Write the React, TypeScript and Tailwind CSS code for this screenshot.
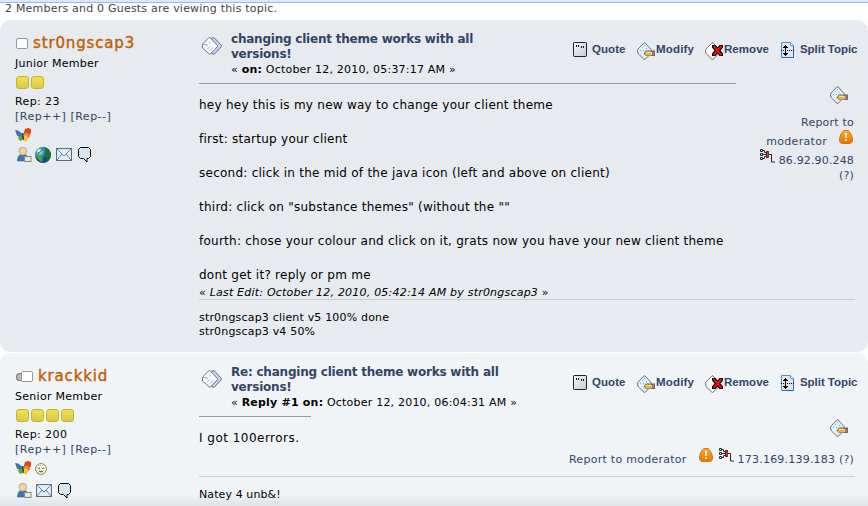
import type { ReactNode } from 'react';

function TopicIcon() {
  return (
    <svg className="block shrink-0" width="21" height="19" viewBox="0 0 21 19" fill="none">
      <path d="M9 1.500 L12 .5 L19.500 8.500 V9.500 L12 17.500 L9 16Z" fill="#c9d2f7" stroke="#5a6070" strokeWidth=".9" />
      <path d="M7 .5 L8 .5 L15.500 8.500 V9.500 L8 17.500 L.5 11 V7.500 L2 5.500Z" fill="#f6fbfd" stroke="#63686e" strokeWidth=".9" />
      <path d="M1 7.500h4v2M5 12.500l3-3M8 13.500l3-3M7 6.500l2-2" stroke="#8d9daa" strokeWidth=".8" />
    </svg>
  );
}

function ModifyIcon() {
  return (
    <svg className="block shrink-0" width="18" height="19" viewBox="0 0 18 19" fill="none">
      <path d="M7 .8 H8 L14.500 8 L13 12.500 L8 17.300 H7 L1.500 12 L.6 10 V7.500Z" fill="#dceff6" stroke="#60656b" strokeWidth=".9" />
      <path d="M5 5.500h1M7 3.500h1M9 6.500h1M3 8.500h1M6 8.500h1" stroke="#8db3c4" />
      <path d="M2 10.500h4" stroke="#fff" />
      <path d="M6.500 11.500L9 8.500H18v5.500H9Z" fill="#7d6a58" />
      <path d="M8 11l1-1.500h5v4H9l-1-1.500Z" fill="#ebb13f" /><path d="M9 10h5v1H9Z" fill="#ffe184" />
      <path d="M14 10h1v3h-1Z" fill="#c6ced3" /><path d="M15 10h2v3h-2Z" fill="#a97378" />
    </svg>
  );
}

function RemoveIcon() {
  return (
    <svg className="block shrink-0" width="18" height="19" viewBox="0 0 18 19" fill="none">
      <path d="M7 .8 H8 L14 8 L13 12.500 L8 17.300 H7 L1.500 12 L.6 10 V7.500Z" fill="#fbfdfd" stroke="#60656b" strokeWidth=".9" />
      <path d="M7 3h3.500l2 2.500L14.500 3H18v2.500l-2.500 3L18 11.500V14h-3.500l-2-2.500-2 2.500H7v-2.500l2.500-3L7 5.500Z" fill="#000" />
      <path d="M8.500 4l8 9M16.500 4l-8 9" stroke="#f01212" strokeWidth="1.900" />
    </svg>
  );
}

function QuoteIcon() {
  return (
    <svg className="block shrink-0" width="14" height="15" viewBox="0 0 14 15">
      <defs><linearGradient id="quoteFill" x2="1" y2="1"><stop stopColor="#f6f7fa" /><stop offset="1" stopColor="#c4c9d5" /></linearGradient></defs>
      <rect x=".5" y=".5" width="13" height="14" rx=".7" fill="url(#quoteFill)" stroke="#20232a" />
      <path d="M3 3h1v2H3zM5 3h1v2H5zM8 4h1v2H8zM10 4h1v2h-1z" fill="#10131a" />
    </svg>
  );
}

function SplitIcon() {
  return (
    <svg className="block shrink-0" width="13" height="16" viewBox="0 0 13 16">
      <path d="M.5.5h9l3 3v12H.5Z" fill="#dfe5eb" stroke="#5b8fc0" /><path d="M12.500 4v11.500H1" fill="none" stroke="#286cac" />
      <path d="M9.500.5v3h3" fill="#fff" stroke="#68a0d0" />
      <path d="M0 8.500h13" stroke="#000" strokeDasharray="1 1" />
      <path d="M4 3h1v1h1v1h1v1H5v2H4V6H2V5h1V4h1zM4 9h1v2h2v1H6v1H5v1H4v-1H3v-1H2v-1h2z" fill="#000" />
    </svg>
  );
}

function AlertIcon() {
  return (
    <svg className="block shrink-0" width="14" height="14" viewBox="0 0 14 14">
      <defs><linearGradient id="alertFill" x2="0" y2="1"><stop stopColor="#ffad32" /><stop offset="1" stopColor="#e87300" /></linearGradient></defs>
      <path d="M5 .5h4c2.500 1.500 4.500 6 4.500 9.500 0 2-1 3.500-3 3.500h-7c-2 0-3-1.500-3-3.500C.5 6.500 2.500 2 5 .5Z" fill="url(#alertFill)" stroke="#d77410" />
      <path d="M6 3h2l-.4 5H6.400ZM6.200 9h1.600v2H6.200Z" fill="#fff" />
    </svg>
  );
}

function NetworkIcon() {
  return (
    <svg className="block shrink-0" width="15" height="14" viewBox="0 0 15 14" fill="none">
      <path d="M.5.5h2v2h-2zM.5 4.500h2v2h-2zM.5 8.500h2v2h-2zM3 1.500h1.500v2H7M3 5.500h4M3 9.500h1.500v-2H7M9 5.500h2.500v7.500H15" stroke="#25272b" />
      <path d="M6.500 2.500h2v6h-2z" fill="#ee321b" stroke="#38211e" /><path d="M7 3h1.500v5H7z" fill="#ee321b" />
    </svg>
  );
}

function Butterfly() {
  return (
    <svg className="block" width="17" height="14" viewBox="0 0 17 14">
      <path d="M0 2l3 .5 4 3 1 3-3 1-3-2Z" fill="#416fb4" /><path d="M3 9l3-1.500 2 1v3l-2 1.500-2-1Z" fill="#5dab25" />
      <path d="M8.500 6L10 1l3-1 3 1v3l-1 3-3-2Z" fill="#dc4717" /><path d="M8 6.500l3-1.500 4 1.500v2l-2.500 2Z" fill="#f27b20" /><path d="M8 8l4-1 1 3-1 3-2 .500-2-2Z" fill="#f7c233" /><path d="M7 5h1.500l.5 4v3H8L7 9Z" fill="#3b4b62" />
    </svg>
  );
}

function Person() {
  return (
    <svg className="block" width="15" height="15" viewBox="0 0 15 15">
      <path d="M.5 14c0-4 1.500-7 5.500-7s5 3 5 7Z" fill="#3d75ad" stroke="#315e90" strokeWidth=".6" />
      <circle cx="5.800" cy="4.200" r="3.900" fill="#ecd5a4" stroke="#b6935c" strokeWidth=".7" />
      <rect x="7.500" y="9.500" width="6.500" height="5" fill="#dedede" stroke="#8b8b8b" /><path d="M9 11h1v2H9zM12 11h1v2h-1z" fill="#fff" />
    </svg>
  );
}

function Globe() {
  return (
    <svg className="block" width="16" height="16" viewBox="0 0 16 16">
      <defs><radialGradient id="sea" cx=".3" cy=".3"><stop stopColor="#e6f7fc" /><stop offset=".45" stopColor="#3d9fd0" /><stop offset="1" stopColor="#104878" /></radialGradient></defs>
      <circle cx="8" cy="8" r="8" fill="url(#sea)" />
      <path d="M1 8l2 0 4 2 1 3-1 2c-3-1-5-4-6-7ZM5 1l3 0 0 2-2 2-2 2-2-1 2-2Z" fill="#4ba43c" /><path d="M11 2l2 .500 2.500 3 .5 3-1.500 3-2 1.500-1-3-2-2 1-3Z" fill="#19742b" /><path d="M3 3l3-1.500-1 3-3 1Z" fill="#e6f5ef" />
    </svg>
  );
}

function Mail() {
  return (
    <svg className="block" width="16" height="13" viewBox="0 0 16 13" fill="none">
      <rect x=".5" y=".5" width="15" height="12" fill="#e3eef6" stroke="#536f88" />
      <path d="M1 1l7 7 7-7M1 12l5-6M15 12l-5-6" stroke="#607f99" />
    </svg>
  );
}

function Balloon() {
  return <svg className="block" width="14" height="16" viewBox="0 0 14 16"><path d="M2.500.5h8l2 2v7l-2 2h-1.500v3.500l-3.500-3.500h-3l-2-2v-7Z" fill="#d8e6f0" stroke="#090b0d" /></svg>;
}

function Crosshair() {
  return (
    <svg className="block" width="12" height="12" viewBox="0 0 12 12" fill="none">
      <circle cx="6" cy="6" r="5.400" fill="#fffff8" stroke="#87852b" /><path d="M3 2.500h6M2 4.500h8M2 7.500h8M3 9.500h6" stroke="#bbb" strokeDasharray="1 1" />
      <path d="M3 5.500h2M7 5.500h2M4 8.500h4" stroke="#77763e" />
    </svg>
  );
}

function Stars({ count }: { count: number }) {
  return (
    <div className="mt-[5px] flex h-[13px] gap-[2px] pl-px">
      {Array.from({ length: count }, (_, i) => (
        <span key={i} className="size-[13px] rounded-[3px] border border-[#c6b42f] bg-linear-to-b from-[#f3e14f] to-[#d8c94b]" />
      ))}
    </div>
  );
}

function Action({ icon, label, className }: { icon: ReactNode; label: string; className: string }) {
  return <a className={`flex shrink-0 items-start ${className}`}>{icon}<span className="leading-[15px] whitespace-nowrap">{label}</span></a>;
}

function Actions() {
  return (
    <div className="flex h-[19px] w-[285px] font-['Liberation_Sans',Arial,sans-serif] text-[11.5px] font-bold tracking-[0.18px] text-[#334466]">
      <Action icon={<QuoteIcon />} label="Quote" className="w-[64px] gap-[5px] tracking-[0.05px]" />
      <Action icon={<ModifyIcon />} label="Modify" className="w-[68px] gap-px" />
      <Action icon={<RemoveIcon />} label="Remove" className="w-[76px] gap-px tracking-[0.05px]" />
      <Action icon={<SplitIcon />} label="Split Topic" className="gap-[6px] tracking-[-0.05px]" />
    </div>
  );
}

function Author({ name, rank, stars, rep, away, contacts }: { name: string; rank: string; stars: number; rep: number; away?: boolean; contacts: ReactNode }) {
  return (
    <aside className="w-[184px] shrink-0 pt-[12px]">
      <div className="flex h-[22px] items-center">
        {away && <span className="mt-px ml-px h-[8px] w-[5px] rounded-l-full border border-r-0 border-[#777] bg-[#bbb]" />}
        <span className={`h-[11px] w-[12px] rounded-[2px] border border-[#999] bg-white ${away ? '' : 'ml-px'}`} />
        <a className="ml-[5px] text-[15px] leading-[22px] tracking-[0.85px] text-[#c06002] [-webkit-text-stroke:0.4px_#c06002]">{name}</a>
      </div>
      <div className="mt-[2px] leading-[15px] tracking-[0.28px]">{rank}</div>
      <Stars count={stars} />
      <div className="mt-[5px] leading-[15px] tracking-[0.4px]">Rep: {rep}</div>
      <div className="leading-[15px] tracking-[0.5px] text-[#334466]"><a>[Rep++]</a> <a>[Rep--]</a></div>
      {contacts}
    </aside>
  );
}

function Heading({ title, prefix, date }: { title: string; prefix: string; date: string }) {
  return (
    <header className="flex h-[51px]">
      <div className="w-[32px] shrink-0 pt-[6px] pl-[3px]"><TopicIcon /></div>
      <div className="w-[342px] shrink-0 pt-px">
        <h2 className="w-[290px] text-[12px] leading-[15px] font-bold tracking-[-0.22px] whitespace-pre-line text-[#334466]">{title}</h2>
        <div className="leading-[15px] whitespace-nowrap">« <b>{prefix}</b> {date} »</div>
      </div>
      <div className="shrink-0 pt-[11px]"><Actions /></div>
    </header>
  );
}

const lines = [
  'hey hey this is my new way to change your client theme',
  'first: startup your client',
  'second: click in the mid of the java icon (left and above on client)',
  'third: click on "substance themes" (without the ""',
  'fourth: chose your colour and click on it, grats now you have your new client theme',
  'dont get it? reply or pm me',
];

export default function App() {
  return (
    <main className="h-[506px] w-[868px] overflow-hidden bg-white font-['DejaVu_Sans',sans-serif] text-[11px] tracking-[0.21px] text-black">
      <div className="h-[20px] border-t-2 border-[#dce8fa]">
        <div className="h-px bg-[#9db7e5]" />
        <p className="-mt-[2px] pl-[5px] leading-[15px] text-[#444]">2 Members and 0 Guests are viewing this topic.</p>
      </div>
      <article className="flex h-[332px] rounded-[11px] bg-[#e7eaef] pl-[15px]">
        <Author name="str0ngscap3" rank="Junior Member" stars={2} rep={23} contacts={
          <>
            <div className="mt-[4px]"><Butterfly /></div>
            <div className="mt-[4px] flex h-[17px] items-center pl-[2px]"><Person /><div className="ml-[3px]"><Globe /></div><div className="ml-[5px]"><Mail /></div><div className="ml-[6px]"><Balloon /></div></div>
          </>
        } />
        <section className="w-[656px] pt-[11px]">
          <Heading title={'changing client theme works with all\nversions!'} prefix="on:" date="October 12, 2010, 05:37:17 AM" />
          <div className="flex h-[217px]">
            <div className="w-[537px] shrink-0">
              <hr className="mt-px border-[#9999aa]" />
              <div className="mt-[13px] flex flex-col gap-[17px] text-[12px] leading-[17px] tracking-[0.25px] whitespace-nowrap">{lines.map(line => <p key={line}>{line}</p>)}</div>
              <div className="mt-px leading-[15px] whitespace-nowrap">« <i>Last Edit: October 12, 2010, 05:42:14 AM by str0ngscap3</i> »</div>
            </div>
            <div className="flex w-[119px] flex-col items-end pt-[4px] pr-px text-[#334466]">
              <div className="pr-[6px]"><ModifyIcon /></div>
              <div className="mt-[10px] leading-[15px]">Report to</div>
              <div className="flex h-[19px] items-start"><span className="pt-[4px] leading-[15px] tracking-[0.3px]">moderator</span><div className="mr-px ml-[12px]"><AlertIcon /></div></div>
              <div className="flex h-[19px] items-start"><NetworkIcon /><span className="pt-[4px] pl-[4px] leading-[15px] tracking-[0.15px]">86.92.90.248</span></div>
              <div className="leading-[15px]">(?)</div>
            </div>
          </div>
          <hr className="border-[#cccccc]" />
          <p className="mt-[11px] leading-[14px] tracking-[0.18px]">str0ngscap3 client v5 100% done<br />str0ngscap3 v4 50%</p>
        </section>
      </article>
      <article className="relative mt-px flex h-[170px] rounded-[11px] bg-[#f0f4f7] pl-[15px]">
        <Author away name="krackkid" rank="Senior Member" stars={4} rep={200} contacts={
          <>
            <div className="mt-[4px] flex items-end gap-[3px]"><Butterfly /><Crosshair /></div>
            <div className="mt-[7px] flex h-[17px] items-center pl-[2px]"><Person /><div className="ml-[4px]"><Mail /></div><div className="ml-[6px]"><Balloon /></div></div>
          </>
        } />
        <section className="w-[656px] pt-[11px]">
          <Heading title={'Re: changing client theme works with all\nversions!'} prefix="Reply #1 on:" date="October 12, 2010, 06:04:31 AM" />
          <div className="flex h-[61px]">
            <div className="w-[112px] shrink-0"><hr className="mt-px border-[#9999aa]" /><p className="mt-[13px] text-[12px] leading-[17px] tracking-[0.48px] whitespace-nowrap">I got 100errors.</p></div>
            <div className="flex flex-1 flex-col items-end pt-[4px] pr-px text-[#334466]">
              <div className="pr-[6px]"><ModifyIcon /></div>
              <div className="mt-[10px] flex h-[19px] items-start"><span className="pt-[4px] leading-[15px] tracking-[0.27px]">Report to moderator</span><div className="ml-[12px]"><AlertIcon /></div><div className="ml-[6px]"><NetworkIcon /></div><span className="pt-[4px] pl-[4px] leading-[15px]">173.169.139.183 (?)</span></div>
            </div>
          </div>
          <hr className="border-[#cccccc]" />
          <p className="mt-[11px] leading-[14px] tracking-[0.1px]">Natey 4 unb&amp;!</p>
        </section>
        <div className="pointer-events-none absolute inset-x-0 top-[141px] h-[12px] bg-linear-to-b from-transparent to-black/7" />
      </article>
    </main>
  );
}
